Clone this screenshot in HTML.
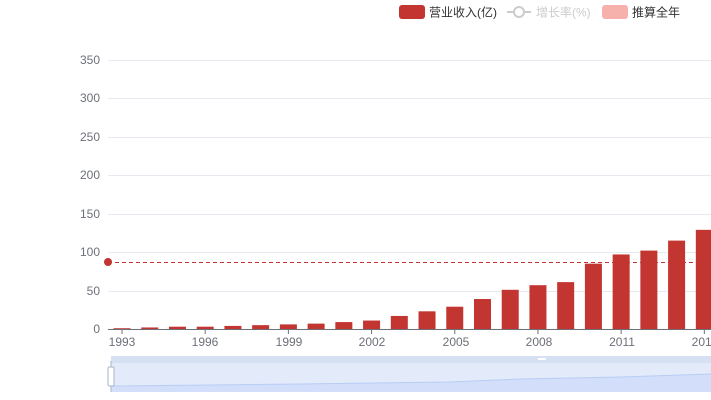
<!DOCTYPE html>
<html><head><meta charset="utf-8"><style>
html,body{margin:0;padding:0;background:#fff;width:711px;height:400px;overflow:hidden}
svg{display:block}
text{font-family:"Liberation Sans","Noto Sans CJK SC",sans-serif}
</style></head><body>
<svg width="711" height="400" viewBox="0 0 711 400" xmlns="http://www.w3.org/2000/svg">
<rect x="399" y="5" width="26" height="14" rx="3" fill="#c23531"/>
<text x="429" y="16.5" font-size="12" fill="#333">营业收入(亿)</text>
<line x1="507" y1="12" x2="531" y2="12" stroke="#ccc" stroke-width="2"/>
<circle cx="519" cy="12" r="5" fill="#fff" stroke="#ccc" stroke-width="2"/>
<text x="536" y="16.5" font-size="12" fill="#ccc">增长率(%)</text>
<rect x="602" y="5" width="26" height="14" rx="3" fill="#f7b1ad"/>
<text x="632" y="16.5" font-size="12" fill="#333">推算全年</text>
<g stroke="#e6e9f0" stroke-width="1">
<line x1="108" y1="60.5" x2="711" y2="60.5"/>
<line x1="108" y1="98.5" x2="711" y2="98.5"/>
<line x1="108" y1="137.5" x2="711" y2="137.5"/>
<line x1="108" y1="175.5" x2="711" y2="175.5"/>
<line x1="108" y1="214.5" x2="711" y2="214.5"/>
<line x1="108" y1="252.5" x2="711" y2="252.5"/>
<line x1="108" y1="291.5" x2="711" y2="291.5"/>
</g>
<g font-size="12" fill="#6e7079" text-anchor="end">
<text x="100" y="64">350</text><text x="100" y="102">300</text><text x="100" y="141">250</text>
<text x="100" y="179">200</text><text x="100" y="218">150</text><text x="100" y="256">100</text>
<text x="100" y="295">50</text><text x="100" y="333">0</text>
</g>
<g fill="#c23531" id="bars"></g>
<line x1="108" y1="329.5" x2="711" y2="329.5" stroke="#6e7079"/>
<g stroke="#6e7079" id="ticks"></g>
<g font-size="12" fill="#6e7079" text-anchor="middle">
<text x="122" y="346">1993</text><text x="205" y="346">1996</text><text x="289" y="346">1999</text>
<text x="372" y="346">2002</text><text x="456" y="346">2005</text><text x="539" y="346">2008</text>
<text x="622" y="346">2011</text><text x="705" y="346">2014</text>
</g>
<line x1="108" y1="262.5" x2="711" y2="262.5" stroke="#c23531" stroke-dasharray="4,3" stroke-width="1"/>
<circle cx="108" cy="262" r="4" fill="#c23531"/>
<rect x="111" y="356" width="600" height="36" fill="#e3ebfb"/>
<rect x="111" y="356" width="600" height="7" fill="#d6e0f3"/>
<path d="M111 386 L300 384 L450 382 L520 379 L620 377 L711 374 L711 392 L111 392 Z" fill="#d2defa"/>
<path d="M111 386 L300 384 L450 382 L520 379 L620 377 L711 374" fill="none" stroke="#b9cdf3"/>
<rect x="538" y="358" width="8" height="2" fill="#fff"/>
<line x1="111" y1="361" x2="111" y2="392" stroke="#aab5c9"/>
<rect x="108" y="367" width="6" height="19" rx="1.5" fill="#fff" stroke="#aab5c9"/>
</svg>
<script>
var v=[1,2,3,3,4,5,6,7,9,11,17,23,29,39,51,57,61,85,97,102,115,129];
var g=document.getElementById('bars'),t=document.getElementById('ticks'),ns='http://www.w3.org/2000/svg';
v.forEach(function(x,i){var c=122+i*27.73,h=x*0.7686;var r=document.createElementNS(ns,'rect');
r.setAttribute('x',c-8.5);r.setAttribute('y',329-h);r.setAttribute('width',17);r.setAttribute('height',h);g.appendChild(r);
if(i%3==0){var l=document.createElementNS(ns,'line');l.setAttribute('x1',c);l.setAttribute('x2',c);l.setAttribute('y1',330);l.setAttribute('y2',334);t.appendChild(l);}});
</script>
</body></html>
